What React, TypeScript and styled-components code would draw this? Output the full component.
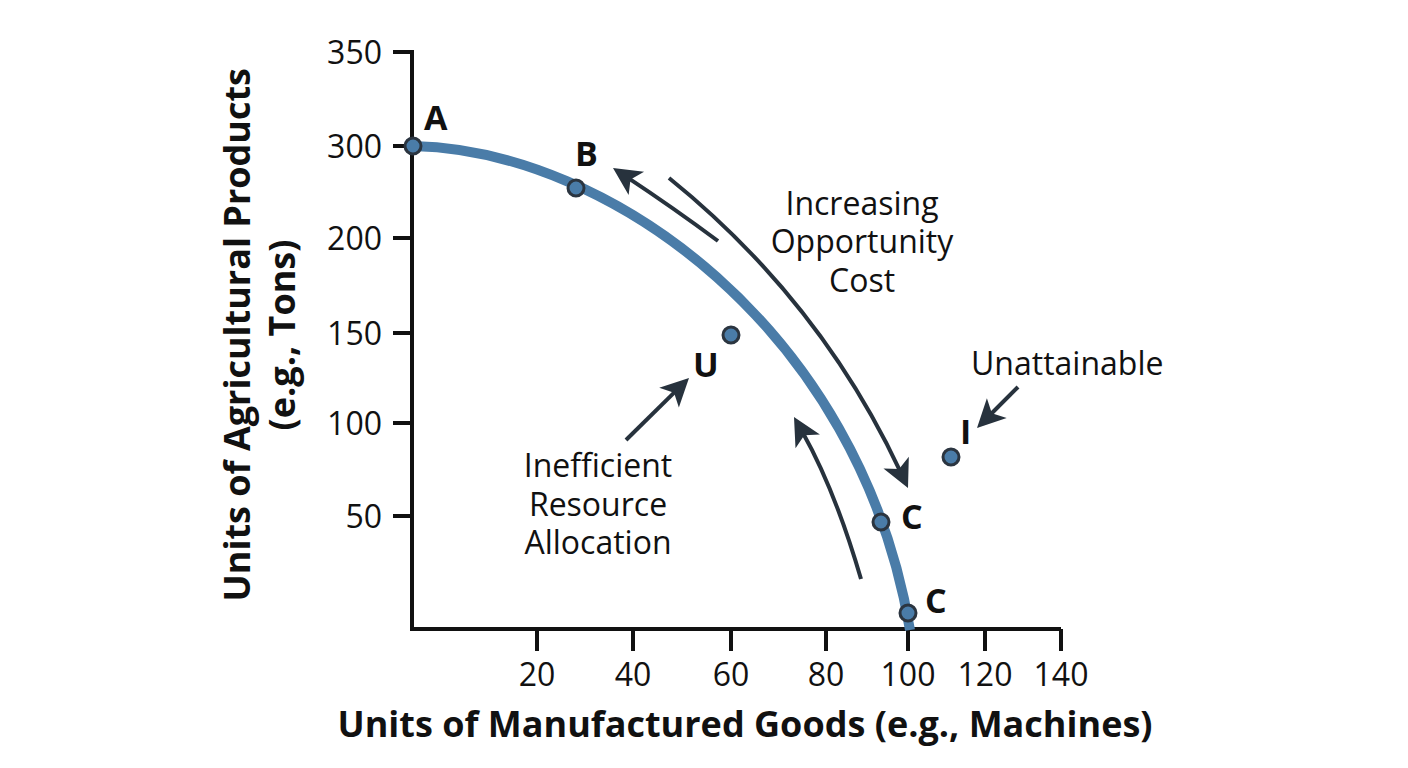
import styled, { createGlobalStyle } from "styled-components";

const GlobalStyle = createGlobalStyle`
    html, body {
        margin: 0;
        padding: 0;
        background: #ffffff;
        font-family: "Open Sans", "Liberation Sans", sans-serif;
        color: #111111;
    }
`;

const Page = styled.div`
    width: 1408px;
    height: 768px;
    background: #ffffff;
    overflow: hidden;
`;

const Figure = styled.div`
    display: grid;
    grid-template-columns: 95px 870px;
    grid-template-rows: 680px auto;
    margin: 20px 0 0 215px;
`;

const YTitleBox = styled.div`
    display: flex;
    align-items: center;
    justify-content: center;
    padding: 0 8px 50px 0;
`;

const YTitle = styled.div`
    writing-mode: vertical-rl;
    transform: rotate(180deg);
    text-align: center;
    font-size: 36px;
    font-weight: 700;
    line-height: 45px;
    white-space: nowrap;
`;

const Plot = styled.svg`
    display: block;
    width: 870px;
    height: 680px;
`;

const XTitle = styled.div`
    grid-column: 2;
    text-align: center;
    font-size: 36px;
    font-weight: 700;
    line-height: 44px;
    padding-top: 2px;
    white-space: nowrap;
`;

const TickLabel = styled.text`
    font-family: "Open Sans", "Liberation Sans", sans-serif;
    font-size: 32px;
    fill: #111111;
`;

const Note = styled.text`
    font-family: "Open Sans", "Liberation Sans", sans-serif;
    font-size: 32px;
    fill: #111111;
`;

const PointLabel = styled.text`
    font-family: "Open Sans", "Liberation Sans", sans-serif;
    font-size: 34px;
    font-weight: 700;
    fill: #111111;
`;

type Pt = [number, number];

const INK = "#111111";
const ARROW = "#27323d";
const BLUE = "#4a7ca8";

const yTicks = [
    { y: 52, label: "350" },
    { y: 146, label: "300" },
    { y: 238, label: "200" },
    { y: 333, label: "150" },
    { y: 423, label: "100" },
    { y: 516, label: "50" },
];

const xTicks = [
    { x: 537, label: "20" },
    { x: 633, label: "40" },
    { x: 731, label: "60" },
    { x: 826, label: "80" },
    { x: 908, label: "100" },
    { x: 985, label: "120" },
    { x: 1061, label: "140" },
];

// production possibility frontier, one cubic from A down to the x axis
const FRONTIER = "M413 146 C610 150 860 330 910 630";

const points = [
    { at: [413, 146] as Pt, label: "A", tx: 424, ty: 130 },
    { at: [576, 188] as Pt, label: "B", tx: 575, ty: 166 },
    { at: [731, 335] as Pt, label: "U", tx: 693, ty: 377 },
    { at: [951, 457] as Pt, label: "I", tx: 960, ty: 444 },
    { at: [881, 522] as Pt, label: "C", tx: 901, ty: 529 },
    { at: [908, 613] as Pt, label: "C", tx: 925, ty: 613 },
];

interface I_ArrowParams {
    from: Pt;
    bend?: Pt;
    tip: Pt;
}

function Arrow({ from, bend, tip }: I_ArrowParams) {
    const ctrl = bend || [(from[0] + tip[0]) / 2, (from[1] + tip[1]) / 2];
    const dx = tip[0] - ctrl[0];
    const dy = tip[1] - ctrl[1];
    const len = Math.hypot(dx, dy);
    const base: Pt = [tip[0] - (dx / len) * 18, tip[1] - (dy / len) * 18];
    const angle = (Math.atan2(dy, dx) * 180) / Math.PI;
    return (
        <g>
            <path
                d={`M${from[0]} ${from[1]} Q${ctrl[0]} ${ctrl[1]} ${base[0]} ${base[1]}`}
                fill="none"
                stroke={ARROW}
                strokeWidth={4}
            />
            <polygon
                points="0,0 -28,-14 -21,0 -28,14"
                fill={ARROW}
                transform={`translate(${tip[0]} ${tip[1]}) rotate(${angle})`}
            />
        </g>
    );
}

function App() {
    return (
        <Page>
            <GlobalStyle />
            <Figure>
                <YTitleBox>
                    <YTitle>
                        Units of Agricultural Products
                        <br />
                        (e.g., Tons)
                    </YTitle>
                </YTitleBox>
                <Plot viewBox="310 20 870 680">
                    {/* axes */}
                    <path d="M393 52 H412 V629 H1061" fill="none" stroke={INK} strokeWidth={4} />
                    {yTicks.map((t) => (
                        <g key={t.label}>
                            <line x1={393} y1={t.y} x2={412} y2={t.y} stroke={INK} strokeWidth={4} />
                            <TickLabel x={382} y={t.y + 12} textAnchor="end">{t.label}</TickLabel>
                        </g>
                    ))}
                    {xTicks.map((t) => (
                        <g key={t.label}>
                            <line x1={t.x} y1={629} x2={t.x} y2={651} stroke={INK} strokeWidth={4} />
                            <TickLabel x={t.x} y={686} textAnchor="middle">{t.label}</TickLabel>
                        </g>
                    ))}

                    <path d={FRONTIER} fill="none" stroke={BLUE} strokeWidth={10} />

                    <Arrow from={[718, 241]} bend={[672, 207]} tip={[613, 168]} />
                    <Arrow from={[669, 178]} bend={[820, 300]} tip={[908, 488]} />
                    <Arrow from={[861, 579]} bend={[835, 490]} tip={[794, 417]} />
                    <Arrow from={[626, 440]} tip={[689, 378]} />
                    <Arrow from={[1018, 387]} tip={[977, 428]} />

                    {points.map((p, i) => (
                        <g key={i}>
                            <circle cx={p.at[0]} cy={p.at[1]} r={8} fill={BLUE} stroke="#2b3540" strokeWidth={3} />
                            <PointLabel x={p.tx} y={p.ty}>{p.label}</PointLabel>
                        </g>
                    ))}

                    <Note x={862} y={215} textAnchor="middle">Increasing</Note>
                    <Note x={862} y={253} textAnchor="middle">Opportunity</Note>
                    <Note x={862} y={292} textAnchor="middle">Cost</Note>
                    <Note x={971} y={375}>Unattainable</Note>
                    <Note x={598} y={477} textAnchor="middle">Inefficient</Note>
                    <Note x={598} y={516} textAnchor="middle">Resource</Note>
                    <Note x={598} y={554} textAnchor="middle">Allocation</Note>
                </Plot>
                <XTitle>Units of Manufactured Goods (e.g., Machines)</XTitle>
            </Figure>
        </Page>
    );
}

export default App;
